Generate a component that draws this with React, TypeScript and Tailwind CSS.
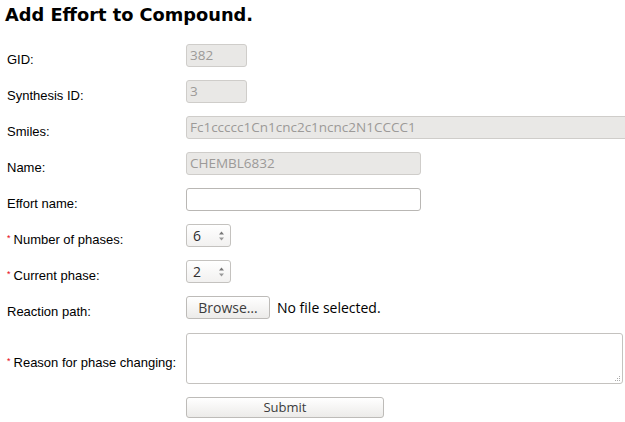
import React from "react";

const label = "text-[13px] text-black [font-family:'Liberation_Sans',Arial,sans-serif]";
const field = "[font-family:'Open_Sans','DejaVu_Sans',sans-serif]";

function Label({ text, req }: { text: string; req?: boolean }) {
  return (
    <div className={`${label} h-[23px] leading-[15px] pt-[8px] pl-[7px] flex items-start whitespace-nowrap`}>
      {req && <span className="text-red-600 text-[9px] leading-[9px] mr-[3px] mt-[2px]">*</span>}
      {text}
    </div>
  );
}

function Disabled({ value, w }: { value: string; w: string }) {
  return (
    <div
      className={`${field} ${w} text-[13.5px] h-[23px] rounded-[3px] border border-[#cfcdca] bg-[#e9e8e6] text-[#9c9a98] pl-[3px] flex items-center overflow-hidden whitespace-nowrap`}
    >
      {value}
    </div>
  );
}

function Spinner({ value }: { value: string }) {
  return (
    <div className={`${field} w-[45px] h-[23px] rounded-[3px] border border-[#c4c2bf] bg-gradient-to-b from-white to-[#f2f1f0] text-[#2e2e2e] pl-[6px] pr-[5px] flex items-center justify-between`}>
      <span className="text-[14px]">{value}</span>
      <svg width="7" height="12" viewBox="0 0 7 12">
        <path d="M1 4.5 L3.5 1.5 L6 4.5 Z" fill="#777" />
        <path d="M1 7.5 L3.5 10.5 L6 7.5 Z" fill="#999" />
      </svg>
    </div>
  );
}

export default function App() {
  return (
    <div className="w-[625px] h-[422px] bg-white overflow-hidden">
      {/* TITLE */}
      <h1 className="pl-[5px] pt-[4px] text-[17.8px] font-bold leading-[22px] text-black [font-family:'DejaVu_Sans',Verdana,sans-serif]">
        Add Effort to Compound.
      </h1>

      {/* FORM */}
      <div className="mt-[18px] grid grid-cols-[186px_1fr] gap-y-[13px]">
        <Label text="GID:" />
        <Disabled value="382" w="w-[61px]" />

        <Label text="Synthesis ID:" />
        <Disabled value="3" w="w-[61px]" />

        <Label text="Smiles:" />
        <Disabled value="Fc1ccccc1Cn1cnc2c1ncnc2N1CCCC1" w="w-[460px]" />

        <Label text="Name:" />
        <Disabled value="CHEMBL6832" w="w-[235px]" />

        <Label text="Effort name:" />
        <div className="w-[235px] h-[23px] rounded-[3px] border border-[#b9b7b4] bg-white" />

        <Label text="Number of phases:" req />
        <Spinner value="6" />

        <Label text="Current phase:" req />
        <Spinner value="2" />

        <Label text="Reaction path:" />
        <div className={`${field} flex items-center gap-[7px]`}>
          <button className="h-[23px] w-[84px] rounded-[3px] border border-[#bdbbb8] bg-gradient-to-b from-white to-[#ecebe9] text-[14px] text-[#3c3c3c]">
            Browse…
          </button>
          <span className="text-[14px] text-black">No file selected.</span>
        </div>

        <div className="h-[52px] flex items-center">
          <Label text="Reason for phase changing:" req />
        </div>
        <div className="relative mt-[1px] w-[437px] h-[51px] rounded-[3px] border border-[#c4c2bf] bg-white">
          <div className="absolute right-[2px] bottom-[2px] grid grid-cols-3 gap-[1px]">
            {[0, 0, 1, 0, 1, 1, 1, 1, 1].map((v, i) => (
              <span key={i} className={`w-[1px] h-[1px] ${v ? "bg-[#aaa]" : "bg-transparent"}`} />
            ))}
          </div>
        </div>

        <div />
        <button className={`${field} w-[198px] h-[21px] rounded-[3px] border border-[#bdbbb8] bg-gradient-to-b from-white to-[#ecebe9] text-[13px] text-[#3c3c3c] leading-none`}>
          Submit
        </button>
      </div>
    </div>
  );
}
